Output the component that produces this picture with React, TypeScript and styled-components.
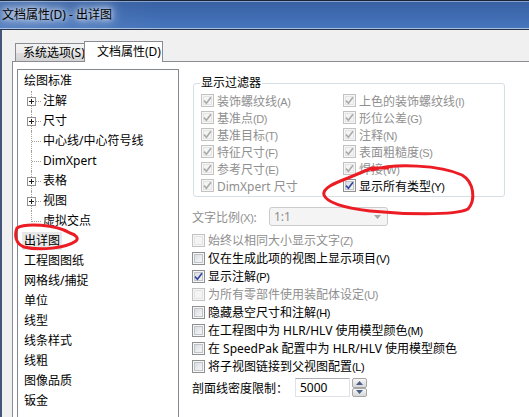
import React from "react";
import styled, { createGlobalStyle } from "styled-components";

const Global = createGlobalStyle`
  html, body { margin: 0; padding: 0; background: #f0f0f0; }
  body {
    font-family: "Noto Sans", "Noto Sans CJK SC", sans-serif;
    font-size: 12px;
    color: #000;
    overflow: hidden;
  }
  * { box-sizing: border-box; }
`;

const Window = styled.div`
  position: relative;
  width: 529px;
  height: 417px;
  overflow: hidden;
  display: flex;
  flex-direction: column;
  background: #f0f0f0;
`;

const TitleBar = styled.div`
  flex: none;
  height: 30px;
  display: flex;
  align-items: center;
  padding-left: 2px;
  background: linear-gradient(90deg, rgba(120, 150, 200, 0.35) 0%, rgba(0, 0, 0, 0) 30%),
    linear-gradient(180deg, #3760a2 0%, #3e6aaf 45%, #4877bd 100%);
  border-top: 1px solid #1a2436;
  border-bottom: 1px solid #25324a;
  box-shadow: inset 0 1px 0 rgba(200, 215, 240, 0.55), inset 0 -1px 0 rgba(190, 210, 235, 0.8);
`;

const TitleText = styled.span`
  font-size: 12px;
  line-height: 16px;
  color: #000;
  text-shadow: 0 0 4px #dfe7f3, 0 0 8px #c7d6ec, 0 0 12px #b4c8e6, 0 0 14px #b4c8e6;
`;

const Body = styled.div`
  flex: 1;
  min-height: 0;
  display: flex;
  flex-direction: column;
  padding: 11px 0 0 10px;
  border-left: 2px solid #44557a;
`;

const TabStrip = styled.div`
  flex: none;
  height: 20px;
  display: flex;
  align-items: flex-end;
  padding-left: 3px;
  position: relative;
  z-index: 1;
`;

const Tab = styled.div<{ $active?: boolean }>`
  flex: none;
  white-space: nowrap;
  border: 1px solid #898c95;
  border-bottom: none;
  ${(p) =>
    p.$active
      ? `
    width: 79px;
    height: 21px;
    margin-bottom: -1px;
    padding: 2px 0 0 12px;
    line-height: 16px;
    background: #fff;
  `
      : `
    width: 69px;
    height: 18px;
    border-right: none;
    padding: 0 0 0 7px;
    line-height: 17px;
    background: linear-gradient(180deg, #f3f3f3 0%, #ebebeb 50%, #dedede 52%, #d3d3d3 100%);
  `}
`;

const Panel = styled.div`
  flex: 1;
  min-height: 0;
  display: flex;
  background: #fff;
  border-top: 1px solid #898c95;
  border-left: 1px solid #898c95;
  padding: 7px 0 0 4px;
`;

const Tree = styled.div`
  flex: none;
  width: 162px;
  height: 360px;
  border: 1px solid #828790;
  background: #fff;
  padding-top: 1px;
`;

const TreeRow = styled.div<{ $child?: boolean }>`
  height: 20px;
  display: flex;
  align-items: center;
  white-space: nowrap;
  padding-left: ${(p) => (p.$child ? "9px" : "6px")};
`;

const TreeLabel = styled.span<{ $selected?: boolean }>`
  line-height: 18px;
  padding: 0 2px;
  margin-left: -2px;
  background: ${(p) => (p.$selected ? "#e8e8e8" : "transparent")};
`;

const Connector = styled.span<{ $last?: boolean }>`
  position: relative;
  flex: none;
  width: 16px;
  height: 100%;
  &::before {
    content: "";
    position: absolute;
    left: 4px;
    top: 0;
    height: ${(p) => (p.$last ? "11px" : "100%")};
    border-left: 1px dotted #a0a0a0;
  }
  &::after {
    content: "";
    position: absolute;
    left: 5px;
    top: 10px;
    width: 9px;
    border-top: 1px dotted #a0a0a0;
  }
`;

const Expander = styled.svg`
  position: absolute;
  left: 0;
  top: 6px;
  z-index: 1;
`;

const RightCol = styled.div`
  flex: 1;
  min-width: 0;
  margin-left: 13px;
  display: flex;
  flex-direction: column;
`;

const FilterBox = styled.fieldset`
  margin: 6px 0 0 1px;
  width: 312px;
  padding: 1px 6px 2px 7px;
  border: 1px solid #d5dfe5;
  border-radius: 3px;
  min-width: 0;
`;

const Legend = styled.legend`
  padding: 0 1px;
  margin-left: -1px;
  line-height: 16px;
  color: #000;
`;

const FilterGrid = styled.div`
  display: grid;
  grid-template-columns: 142px 1fr;
`;

const CheckRow = styled.div<{ $h: number; $disabled?: boolean }>`
  height: ${(p) => p.$h}px;
  display: flex;
  align-items: center;
  gap: 3px;
  white-space: nowrap;
  color: ${(p) => (p.$disabled ? "#8f8f8f" : "#000")};
`;

const Box = styled.span<{ $disabled?: boolean }>`
  flex: none;
  width: 13px;
  height: 13px;
  display: flex;
  align-items: center;
  justify-content: center;
  border: 1px solid ${(p) => (p.$disabled ? "#c2c2c2" : "#8e8f8f")};
  background: ${(p) =>
    p.$disabled ? "#f4f4f4" : "linear-gradient(135deg, #d0d4da 0%, #eceef0 60%, #f8f8f8 100%)"};
  box-shadow: inset 0 0 0 1px #f6f6f6,
    inset 0 0 0 2px ${(p) => (p.$disabled ? "#e4e4e4" : "#bfc4ca")};
`;

const Key = styled.span`
  font-family: "Liberation Sans", sans-serif;
  font-size: 11px;
  letter-spacing: -0.4px;
`;

const ComboRow = styled.div`
  margin-top: 10px;
  height: 19px;
  display: flex;
  align-items: center;
  color: #8f8f8f;
`;

const ComboLabel = styled.span`
  width: 77px;
  flex: none;
  white-space: nowrap;
`;

const Combo = styled.div`
  width: 119px;
  height: 19px;
  display: flex;
  align-items: center;
  justify-content: space-between;
  padding: 0 6px 0 4px;
  border: 1px solid #cbcbcb;
  border-radius: 3px;
  background: #f4f4f4;
  color: #8f8f8f;
`;

const OptionList = styled.div`
  margin-top: 5px;
  display: flex;
  flex-direction: column;
`;

const SpinRow = styled.div`
  margin-top: 3px;
  height: 19px;
  display: flex;
  align-items: center;
`;

const SpinLabel = styled.span`
  width: 103px;
  flex: none;
  white-space: nowrap;
`;

const SpinInput = styled.div`
  width: 55px;
  height: 19px;
  display: flex;
  align-items: center;
  padding-left: 4px;
  border: 1px solid #dfe3e8;
  border-top-color: #abadb3;
  background: #fff;
`;

const Spinner = styled.div`
  margin-left: 2px;
  width: 15px;
  height: 19px;
  display: flex;
  flex-direction: column;
`;

const SpinButton = styled.div`
  flex: 1;
  display: flex;
  align-items: center;
  justify-content: center;
  border: 1px solid #a7a7a7;
  border-radius: 2px;
  background: linear-gradient(180deg, #f7f7f7 0%, #e6e6e6 50%, #d8d8d8 100%);
`;

const Overlay = styled.svg`
  position: absolute;
  left: 0;
  top: 0;
  pointer-events: none;
  z-index: 5;
`;

const Check = ({ disabled }: { disabled?: boolean }) => (
  <svg width="9" height="9" viewBox="0 0 9 9">
    <path
      d="M1 4.6 L3.4 7.2 L8 1.2"
      fill="none"
      stroke={disabled ? "#aaaaaa" : "#33449a"}
      strokeWidth="1.6"
      strokeLinejoin="miter"
    />
  </svg>
);

type Opt = { text: string; k?: string; disabled?: boolean; checked?: boolean };

const CheckItem = ({ o, h }: { o: Opt; h: number }) => (
  <CheckRow $h={h} $disabled={o.disabled}>
    <Box $disabled={o.disabled}>{o.checked && <Check disabled={o.disabled} />}</Box>
    <span>
      {o.text}
      {o.k && <Key>({o.k})</Key>}
    </span>
  </CheckRow>
);

const PlusBox = () => (
  <Expander width="9" height="9" viewBox="0 0 9 9">
    <rect x="0.5" y="0.5" width="8" height="8" fill="#fff" stroke="#919191" />
    <path d="M2 4.5 H7 M4.5 2 V7" stroke="#202020" strokeWidth="1" />
  </Expander>
);

const treeChildren = [
  { label: "注解", plus: true },
  { label: "尺寸", plus: true },
  { label: "中心线/中心符号线" },
  { label: "DimXpert" },
  { label: "表格", plus: true },
  { label: "视图", plus: true },
  { label: "虚拟交点" },
];

const treeRest = ["工程图图纸", "网格线/捕捉", "单位", "线型", "线条样式", "线粗", "图像品质", "钣金"];

const filterLeft: Opt[] = [
  { text: "装饰螺纹线", k: "A", disabled: true, checked: true },
  { text: "基准点", k: "D", disabled: true, checked: true },
  { text: "基准目标", k: "T", disabled: true, checked: true },
  { text: "特征尺寸", k: "F", disabled: true, checked: true },
  { text: "参考尺寸", k: "E", disabled: true, checked: true },
  { text: "DimXpert 尺寸", disabled: true, checked: true },
];

const filterRight: Opt[] = [
  { text: "上色的装饰螺纹线", k: "I", disabled: true, checked: true },
  { text: "形位公差", k: "G", disabled: true, checked: true },
  { text: "注释", k: "N", disabled: true, checked: true },
  { text: "表面粗糙度", k: "S", disabled: true, checked: true },
  { text: "焊接", k: "W", disabled: true, checked: true },
  { text: "显示所有类型", k: "Y", checked: true },
];

const options: Opt[] = [
  { text: "始终以相同大小显示文字", k: "Z", disabled: true },
  { text: "仅在生成此项的视图上显示项目", k: "V" },
  { text: "显示注解", k: "P", checked: true },
  { text: "为所有零部件使用装配体设定", k: "U", disabled: true },
  { text: "隐藏悬空尺寸和注解", k: "H" },
  { text: "在工程图中为 HLR/HLV 使用模型颜色", k: "M" },
  { text: "在 SpeedPak 配置中为 HLR/HLV 使用模型颜色" },
  { text: "将子视图链接到父视图配置", k: "L" },
];

export default function App() {
  const filterCells: Opt[] = [];
  filterLeft.forEach((o, i) => {
    filterCells.push(o, filterRight[i]);
  });
  return (
    <>
      <Global />
      <Window>
        <TitleBar>
          <TitleText>文档属性(D) - 出详图</TitleText>
        </TitleBar>
        <Body>
          <TabStrip>
            <Tab>系统选项(S)</Tab>
            <Tab $active>文档属性(D)</Tab>
          </TabStrip>
          <Panel>
            <Tree>
              <TreeRow>
                <TreeLabel>绘图标准</TreeLabel>
              </TreeRow>
              {treeChildren.map((c, i) => (
                <TreeRow $child key={c.label}>
                  <Connector $last={i === treeChildren.length - 1}>{c.plus && <PlusBox />}</Connector>
                  <TreeLabel>{c.label}</TreeLabel>
                </TreeRow>
              ))}
              <TreeRow>
                <TreeLabel $selected>出详图</TreeLabel>
              </TreeRow>
              {treeRest.map((t) => (
                <TreeRow key={t}>
                  <TreeLabel>{t}</TreeLabel>
                </TreeRow>
              ))}
            </Tree>
            <RightCol>
              <FilterBox>
                <Legend>显示过滤器</Legend>
                <FilterGrid>
                  {filterCells.map((o) => (
                    <CheckItem key={o.text} o={o} h={17} />
                  ))}
                </FilterGrid>
              </FilterBox>
              <ComboRow>
                <ComboLabel>
                  文字比例<Key>(X)</Key>:
                </ComboLabel>
                <Combo>
                  <span>1:1</span>
                  <svg width="7" height="4" viewBox="0 0 7 4">
                    <path d="M0 0 H7 L3.5 4 Z" fill="#a5a5a5" />
                  </svg>
                </Combo>
              </ComboRow>
              <OptionList>
                {options.map((o) => (
                  <CheckItem key={o.text} o={o} h={18} />
                ))}
              </OptionList>
              <SpinRow>
                <SpinLabel>剖面线密度限制：</SpinLabel>
                <SpinInput>5000</SpinInput>
                <Spinner>
                  <SpinButton>
                    <svg width="7" height="4" viewBox="0 0 7 4">
                      <path d="M0 4 H7 L3.5 0 Z" fill="#4a5e86" />
                    </svg>
                  </SpinButton>
                  <SpinButton>
                    <svg width="7" height="4" viewBox="0 0 7 4">
                      <path d="M0 0 H7 L3.5 4 Z" fill="#4a5e86" />
                    </svg>
                  </SpinButton>
                </Spinner>
              </SpinRow>
            </RightCol>
          </Panel>
        </Body>
        <Overlay width="529" height="417" viewBox="0 0 529 417">
          <g fill="none" stroke="#ec1c24" strokeWidth="3" strokeLinecap="round" strokeLinejoin="round">
            <path d="M70 233 C55 224, 25 223, 17 228 C14 236, 16 244, 24 247 C40 251, 66 248, 76 241 C79 238, 76 235, 70 233" />
            <path d="M372 170 C395 163, 440 165, 462 175 C474 182, 476 200, 468 209 C455 216, 400 214, 370 211 C345 208, 327 203, 324 195 C322 188, 335 183, 348 178 L372 168 L388 168" />
          </g>
        </Overlay>
      </Window>
    </>
  );
}
